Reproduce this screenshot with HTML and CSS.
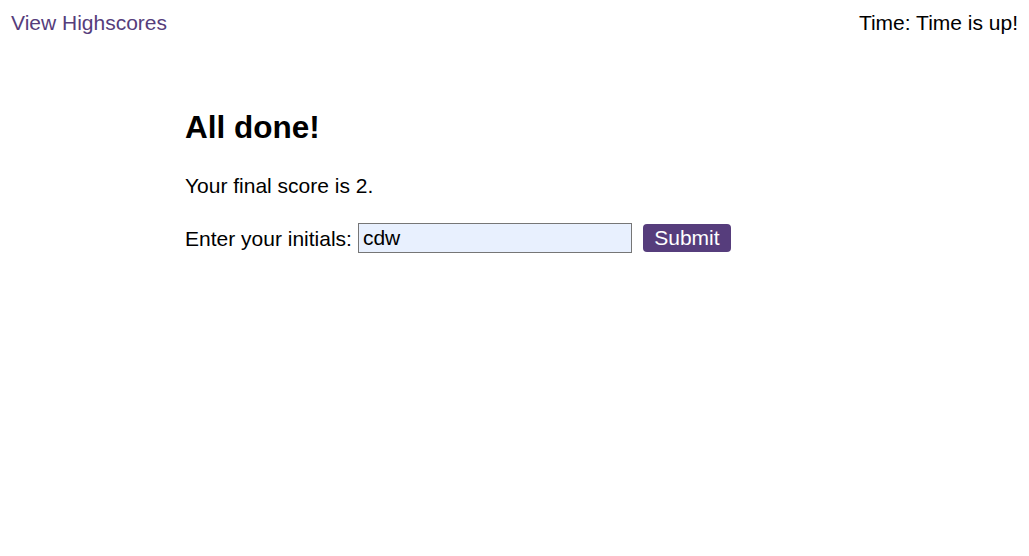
FILE: index.html
```html
<!DOCTYPE html>
<html>
<head>
<meta charset="utf-8">
<link rel="stylesheet" href="styles.css">
</head>
<body>
<header class="topbar">
  <a class="hs-link" href="#">View Highscores</a>
  <div class="timer">Time: Time is up!</div>
</header>
<main class="content">
  <h1 class="title">All done!</h1>
  <p class="score">Your final score is 2.</p>
  <form class="entry">
    <label class="entry-label" for="initials">Enter your initials:</label>
    <input class="entry-input" id="initials" type="text" value="cdw">
    <button class="entry-btn" type="button">Submit</button>
  </form>
</main>
</body>
</html>
```
FILE: styles.css
```css
html, body {
  margin: 0;
  padding: 0;
  background: #ffffff;
}
body {
  font-family: "Liberation Sans", Arial, sans-serif;
  font-size: 21px;
  color: #000;
  line-height: 23px;
}
.topbar {
  display: flex;
  justify-content: space-between;
  padding: 11px 11px 0 11px;
}
.hs-link {
  color: #563d7c;
  text-decoration: none;
}
.timer {
  color: #000;
}
.content {
  padding-left: 185px;
  padding-top: 75px;
}
.title {
  margin: 0;
  font-size: 31.5px;
  line-height: 37px;
  font-weight: bold;
}
.score {
  margin: 28px 0 0 0;
}
.entry {
  margin-top: 26px;
  display: flex;
  align-items: center;
}
.entry-label {
  margin-right: 6px;
}
.entry-input {
  box-sizing: border-box;
  width: 274px;
  height: 30px;
  border: 1px solid #767676;
  background: #e8f0fe;
  font-family: "Liberation Sans", Arial, sans-serif;
  font-size: 21px;
  padding: 0 4px;
  margin: 0;
  color: #000;
}
.entry-btn {
  box-sizing: border-box;
  margin-left: 11px;
  width: 88px;
  height: 28px;
  border: none;
  border-radius: 4px;
  background: #563d7c;
  color: #fff;
  font-family: "Liberation Sans", Arial, sans-serif;
  font-size: 21px;
  padding: 0;
}
```
